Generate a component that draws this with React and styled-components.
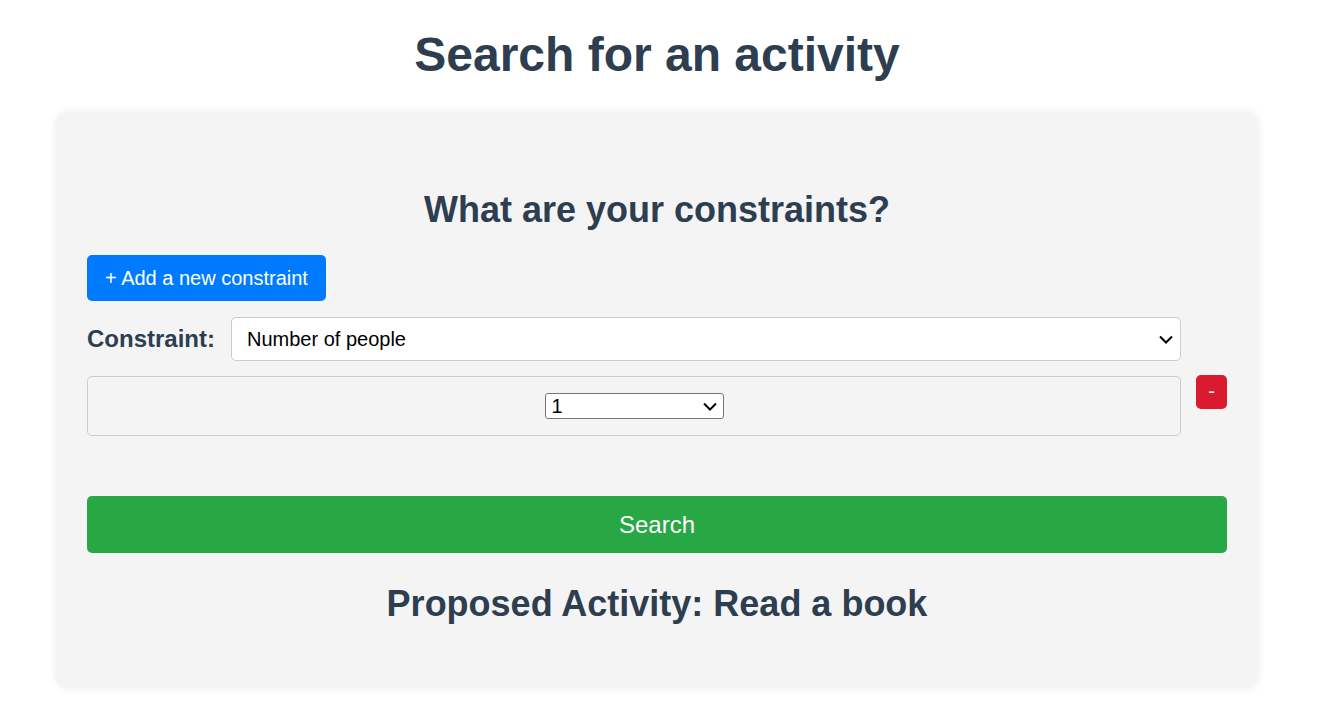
import React, { useState } from 'react';
import styled, { createGlobalStyle } from 'styled-components';

const GlobalStyle = createGlobalStyle`
  body {
    margin: 0;
    background: #ffffff;
    font-family: 'Liberation Sans', Arial, sans-serif;
    color: #2c3e50;
  }
`;

const chevron = `url("data:image/svg+xml,%3Csvg xmlns='http://www.w3.org/2000/svg' width='14' height='9' viewBox='0 0 14 9'%3E%3Cpath d='M1 1.5l6 6 6-6' fill='none' stroke='%23000' stroke-width='2'/%3E%3C/svg%3E")`;

const Page = styled.div`
  padding: 27px 7px 39px 0;
`;

const Title = styled.h1`
  margin: 0 0 31px;
  font-size: 48px;
  font-weight: 700;
  text-align: center;
  color: #2c3e50;
`;

const Card = styled.div`
  width: 1200px;
  box-sizing: border-box;
  margin: 0 auto;
  padding: 30px;
  background: #f4f4f4;
  border-radius: 10px;
  box-shadow: 0 0 10px rgba(0, 0, 0, 0.1);
`;

const Heading = styled.h2`
  margin: ${props => props.top || 0}px 0 ${props => props.bottom || 0}px;
  font-size: 36px;
  font-weight: 700;
  text-align: center;
  color: #2c3e50;
`;

const Button = styled.button`
  border: none;
  border-radius: 5px;
  color: #fff;
  font-family: inherit;
  cursor: pointer;
  background: ${props => props.color};
`;

const AddButton = styled(Button)`
  display: block;
  padding: 11px 18px;
  font-size: 20px;
  line-height: 24px;
`;

const ConstraintGrid = styled.div`
  display: grid;
  grid-template-columns: 1fr 31px;
  column-gap: 15px;
  row-gap: 15px;
  margin-top: 16px;
`;

const LabelRow = styled.div`
  grid-column: 1;
  display: flex;
  align-items: center;
  gap: 16px;
`;

const Label = styled.label`
  font-size: 24px;
  font-weight: 700;
  color: #2c3e50;
  white-space: nowrap;
`;

const SelectBase = styled.select`
  appearance: none;
  font-family: inherit;
  font-size: 20px;
  color: #000;
  background-color: #fff;
  background-image: ${chevron};
  background-repeat: no-repeat;
`;

const TypeSelect = styled(SelectBase)`
  flex: 1;
  height: 44px;
  padding: 0 30px 0 15px;
  border: 1px solid #ccc;
  border-radius: 5px;
  background-position: right 7px center;
`;

const ValueBox = styled.div`
  grid-column: 1;
  display: flex;
  align-items: center;
  justify-content: center;
  height: 60px;
  box-sizing: border-box;
  border: 1px solid #ccc;
  border-radius: 5px;
`;

const ValueSelect = styled(SelectBase)`
  width: 179px;
  height: 26px;
  padding: 0 24px 0 6px;
  border: 1px solid #767676;
  border-radius: 3px;
  background-position: right 6px center;
`;

const RemoveButton = styled(Button)`
  grid-column: 2;
  align-self: start;
  margin-top: -1px;
  width: 31px;
  height: 34px;
  padding: 0 0 2px;
  font-size: 20px;
  font-weight: 400;
`;

const SearchButton = styled(Button)`
  display: block;
  width: 100%;
  margin-top: 60px;
  padding: 15px;
  font-size: 24px;
  line-height: 27px;
`;

export default function App() {
  const [people, setPeople] = useState('1');
  const [type, setType] = useState('people');

  return (
    <Page>
      <GlobalStyle />
      <Title>Search for an activity</Title>
      <Card>
        <Heading top={46} bottom={24}>What are your constraints?</Heading>
        <AddButton color="#007bff">+ Add a new constraint</AddButton>
        <ConstraintGrid>
          <LabelRow>
            <Label>Constraint:</Label>
            <TypeSelect value={type} onChange={e => setType(e.target.value)}>
              <option value="people">Number of people</option>
              <option value="type">Type</option>
              <option value="price">Price</option>
            </TypeSelect>
          </LabelRow>
          <ValueBox>
            <ValueSelect value={people} onChange={e => setPeople(e.target.value)}>
              {['1', '2', '3', '4', '5', '8'].map(n => (
                <option key={n} value={n}>{n}</option>
              ))}
            </ValueSelect>
          </ValueBox>
          <RemoveButton color="#da1a2e">-</RemoveButton>
        </ConstraintGrid>
        <SearchButton color="#28a745">Search</SearchButton>
        <Heading top={30} bottom={32}>Proposed Activity: Read a book</Heading>
      </Card>
    </Page>
  );
}
